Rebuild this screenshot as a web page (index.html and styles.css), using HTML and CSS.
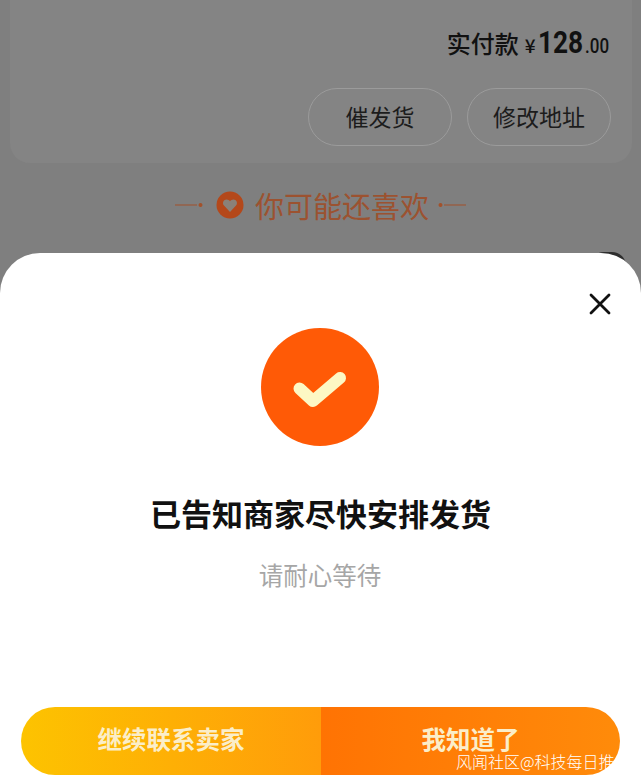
FILE: index.html

```html
<!DOCTYPE html>
<html lang="zh-CN">
<head>
  <meta charset="UTF-8" />
  <meta name="viewport" content="width=device-width, initial-scale=1" />
  <title>已告知商家</title>
  <link rel="stylesheet" href="styles.css">
</head>
<body>
  <div class="page">
    <div class="backdrop">
      <div class="order-card">
        <div class="price-row">
          <span class="price-label">实付款</span>
          <span class="price-sign">¥</span>
          <span class="price-big">128</span>
          <span class="price-small">.00</span>
        </div>
        <div class="order-actions">
          <div class="pill pill-first">催发货</div>
          <div class="pill">修改地址</div>
        </div>
      </div>
      <div class="guess">
        <svg class="guess-line" width="28" height="6" viewBox="0 0 28 6">
          <path d="M0 3H22" stroke="#a3512a" stroke-width="1" />
          <circle cx="25.5" cy="3" r="2" fill="#a3512a" />
        </svg>
        <svg class="guess-heart" width="28" height="28" viewBox="0 0 28 28">
          <circle cx="14" cy="14" r="13.5" fill="#b4481a" />
          <path d="M14 21L8 14.6C5.8 11.8 7.6 8.4 10.6 8.4C12 8.4 13.2 9.1 14 10.3C14.8 9.1 16 8.4 17.4 8.4C20.4 8.4 22.2 11.8 20 14.6Z" fill="#8a8178" />
        </svg>
        <span class="guess-text">你可能还喜欢</span>
        <svg class="guess-line" width="28" height="6" viewBox="0 0 28 6">
          <circle cx="2.5" cy="3" r="2" fill="#a3512a" />
          <path d="M6 3H28" stroke="#a3512a" stroke-width="1" />
        </svg>
      </div>
    </div>

    <div class="peek"></div>

    <div class="sheet">
      <div class="sheet-close">
        <svg width="22" height="22" viewBox="0 0 22 22">
          <path d="M2 2L20 20M20 2L2 20" stroke="#111" stroke-width="2.8" stroke-linecap="round" />
        </svg>
      </div>
      <svg class="done-icon" width="118" height="118" viewBox="0 0 118 118">
        <circle cx="59" cy="59" r="59" fill="#ff5a06" />
        <path d="M38.500 60.500L52 73L79 50" fill="none" stroke="#fdf8c4" stroke-width="12" stroke-linecap="round" stroke-linejoin="round" />
      </svg>
      <div class="sheet-title">已告知商家尽快安排发货</div>
      <div class="sheet-sub">请耐心等待</div>
      <div class="sheet-buttons">
        <div class="btn btn-left">继续联系卖家</div>
        <div class="btn btn-right">我知道了</div>
      </div>
    </div>

    <div class="watermark">风闻社区@科技每日推</div>
  </div>
</body>
</html>
```

FILE: styles.css

```css
body {
  margin: 0;
  padding: 0;
  font-family: "Noto Sans CJK SC", "Liberation Sans", sans-serif;
}
.page {
  position: relative;
  width: 641px;
  height: 784px;
  overflow: hidden;
  background-color: #7f7f7f;
}
.backdrop {
  height: 253px;
  overflow: hidden;
}
.order-card {
  height: 163px;
  margin: 0 9px 0 10px;
  box-sizing: border-box;
  padding: 25px 23px 0 0;
  background-color: #848484;
  border-radius: 0 0 20px 20px;
}
.price-row {
  display: flex;
  justify-content: flex-end;
  align-items: baseline;
  height: 34px;
  line-height: 34px;
  color: #111;
}
.price-label {
  font-size: 24px;
  font-weight: 500;
}
.price-sign {
  font-size: 19px;
  font-weight: 500;
  margin-left: 6px;
}
.price-big {
  display: inline-block;
  font-family: "Roboto", sans-serif;
  font-size: 32px;
  font-weight: 700;
  margin: 0 -3px;
  transform: scaleX(0.82);
}
.price-small {
  display: inline-block;
  font-family: "Roboto", sans-serif;
  font-size: 20px;
  font-weight: 500;
  margin: 0 -2px;
  transform: scaleX(0.85);
}
.order-actions {
  display: flex;
  justify-content: flex-end;
  gap: 15px;
  margin-top: 29px;
  margin-right: -2px;
}
.pill {
  width: 144px;
  height: 58px;
  box-sizing: border-box;
  border: 1px solid #9b9b9b;
  border-radius: 29px;
  color: #1c1c1c;
  font-size: 23px;
  line-height: 54px;
  text-align: center;
}
.guess {
  display: flex;
  justify-content: center;
  align-items: center;
  height: 28px;
  margin-top: 28px;
}
.guess-heart {
  margin-left: 13px;
}
.guess-text {
  margin: 0 9px 0 11px;
  color: #9c5230;
  font-size: 29px;
  line-height: 28px;
}
.peek {
  position: absolute;
  top: 252px;
  left: 590px;
  width: 36px;
  height: 36px;
  background-color: #2e2e2e;
  border-radius: 14px;
}
.sheet {
  position: relative;
  height: 531px;
  background-color: #fff;
  border-radius: 40px 40px 0 0;
  display: flex;
  flex-direction: column;
  align-items: center;
}
.sheet-close {
  align-self: flex-end;
  height: 22px;
  margin: 40px 30px 0 0;
}
.done-icon {
  display: block;
  margin: 13px 2px 0 0;
}
.sheet-title {
  margin-top: 44px;
  color: #111;
  font-size: 31px;
  line-height: 46px;
  font-weight: 700;
}
.sheet-sub {
  margin: 21px 1px 0 0;
  color: #a6a6a6;
  font-size: 24.500px;
  line-height: 36px;
  font-weight: 400;
}
.sheet-buttons {
  display: flex;
  width: 599px;
  height: 68px;
  margin-top: 114px;
  border-radius: 34px;
  overflow: hidden;
}
.btn {
  color: #fbeec9;
  font-size: 24.500px;
  font-weight: 700;
  line-height: 64px;
  text-align: center;
}
.btn-left {
  width: 300px;
  background: linear-gradient(90deg, #fdc300 0%, #ff9c0a 100%);
}
.btn-right {
  width: 299px;
  background: linear-gradient(90deg, #ff7303 0%, #ff8b0a 100%);
}
.watermark {
  position: absolute;
  left: 456px;
  top: 750px;
  width: 159px;
  overflow: hidden;
  white-space: nowrap;
  color: #fff;
  font-size: 16px;
  line-height: 22px;
  font-weight: 300;
}
```
